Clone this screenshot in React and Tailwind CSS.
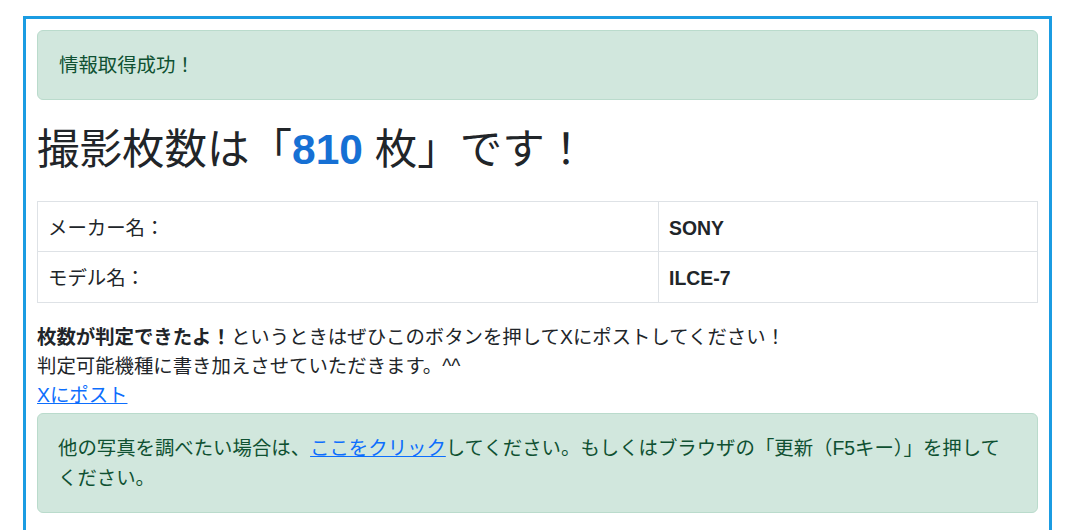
export default function App() {
  const font = {
    fontFamily: '"Liberation Sans", "Noto Sans CJK JP", sans-serif',
  };

  return (
    <div
      className="min-h-[530px] bg-white pl-[23px] pr-[28px] pt-4 text-[#212529]"
      style={font}
    >
      <div className="border-[3px] border-[#1b9ce2] px-[11px] pt-[11px] pb-6">
        {/* success alert */}
        <div className="flex h-[70px] items-center rounded-[6px] border border-[#badbcc] bg-[#d1e7dd] px-[21px] pt-[2px] text-[19.4px] text-[#0f5132]">
          情報取得成功！
        </div>

        <h1 className="mt-[24px] mb-[26px] text-[42.5px] leading-[51px] font-normal">
          撮影枚数は「<span className="font-bold text-[#1670d4]">810</span> 枚」です！
        </h1>

        {/* camera info table */}
        <div className="grid grid-cols-[621px_1fr] border border-[#dee2e6] text-[19.4px]">
          <div className="flex h-[50px] items-center border-r border-b border-[#dee2e6] px-[10px] pt-[4px]">
            メーカー名：
          </div>
          <div className="flex h-[50px] items-center border-b border-[#dee2e6] px-[10px] pt-[4px] font-bold">
            SONY
          </div>
          <div className="flex h-[50px] items-center border-r border-[#dee2e6] px-[10px] pt-[4px]">
            モデル名：
          </div>
          <div className="flex h-[50px] items-center px-[10px] pt-[4px] font-bold">
            ILCE-7
          </div>
        </div>

        <p className="mt-[20px] text-[19.4px] leading-[28.8px]">
          <b>枚数が判定できたよ！</b>というときはぜひこのボタンを押してXにポストしてください！
          <br />
          判定可能機種に書き加えさせていただきます。^^
          <br />
          <a href="#" className="text-[#0d6efd] underline">
            Xにポスト
          </a>
        </p>

        {/* reload alert */}
        <div className="mt-[4px] rounded-[6px] border border-[#badbcc] bg-[#d1e7dd] px-[20px] py-[19px] text-[19.4px] leading-[30px] text-[#0f5132]">
          他の写真を調べたい場合は、
          <a href="#" className="text-[#0d6efd] underline">
            ここをクリック
          </a>
          してください。もしくはブラウザの「更新（F5キー）」を押してください。
        </div>
      </div>
    </div>
  );
}
